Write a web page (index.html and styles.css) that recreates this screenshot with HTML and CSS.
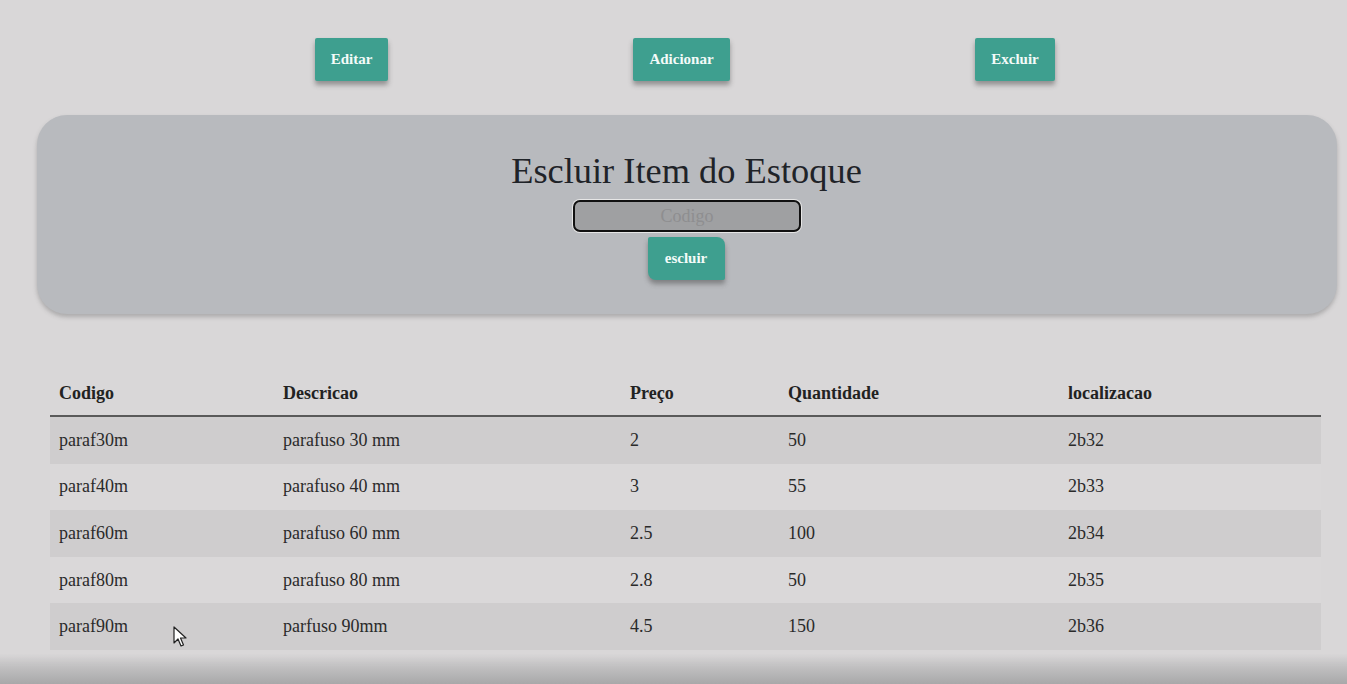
FILE: index.html
```html
<!DOCTYPE html>
<html lang="pt">
<head>
<meta charset="utf-8">
<title>Estoque</title>
<link rel="stylesheet" href="styles.css">
</head>
<body>
<div class="page">
  <nav class="actions">
    <button class="btn btn-editar">Editar</button>
    <button class="btn btn-adicionar">Adicionar</button>
    <button class="btn btn-excluir">Excluir</button>
  </nav>

  <section class="panel">
    <h1 class="panel-title">Escluir Item do Estoque</h1>
    <input class="code-input" type="text" placeholder="Codigo">
    <button class="btn btn-escluir">escluir</button>
  </section>

  <table class="stock">
    <thead>
      <tr>
        <th class="c1">Codigo</th>
        <th class="c2">Descricao</th>
        <th class="c3">Preço</th>
        <th class="c4">Quantidade</th>
        <th class="c5">localizacao</th>
      </tr>
    </thead>
    <tbody>
      <tr><td>paraf30m</td><td>parafuso 30 mm</td><td>2</td><td>50</td><td>2b32</td></tr>
      <tr><td>paraf40m</td><td>parafuso 40 mm</td><td>3</td><td>55</td><td>2b33</td></tr>
      <tr><td>paraf60m</td><td>parafuso 60 mm</td><td>2.5</td><td>100</td><td>2b34</td></tr>
      <tr><td>paraf80m</td><td>parafuso 80 mm</td><td>2.8</td><td>50</td><td>2b35</td></tr>
      <tr><td>paraf90m</td><td>parfuso 90mm</td><td>4.5</td><td>150</td><td>2b36</td></tr>
    </tbody>
  </table>
</div>

<svg class="cursor" width="14" height="22" viewBox="0 0 14 22">
  <path d="M1 1 L1 17 L5 13 L8 20 L10.5 19 L7.5 12 L13 12 Z" fill="#fff" stroke="#222" stroke-width="1.2" stroke-linejoin="round"/>
</svg>
<div class="bottom-fade"></div>
</body>
</html>
```

FILE: styles.css
```css
html, body {
  margin: 0;
  padding: 0;
  background: #d9d7d8;
  font-family: "Liberation Serif", "Times New Roman", serif;
  color: #222;
  height: 100%;
  overflow: hidden;
}

.page {
  padding-top: 38px;
}

.actions {
  margin-left: 35px;
  width: 1300px;
  display: flex;
  justify-content: center;
  gap: 245px;
}

.btn {
  font-family: "Liberation Serif", "Times New Roman", serif;
  font-weight: bold;
  font-size: 15px;
  color: #f4fbf9;
  background: #3e9f8f;
  border: none;
  height: 43px;
  padding: 0 16px;
  border-radius: 2px;
  box-shadow: 0 4px 5px rgba(60, 60, 60, 0.45);
  cursor: pointer;
}

.btn-editar { width: 73px; padding: 0; }
.btn-adicionar { width: 97px; padding: 0; }
.btn-excluir { width: 80px; padding: 0; }

.panel {
  margin-top: 34px;
  margin-left: 37px;
  width: 1300px;
  height: 199px;
  box-sizing: border-box;
  background: #b8babe;
  border-radius: 30px;
  box-shadow: 0 3px 4px rgba(90, 90, 90, 0.35);
  display: flex;
  flex-direction: column;
  align-items: center;
  padding-top: 36px;
}

.panel-title {
  margin: 0;
  font-weight: normal;
  font-size: 36.4px;
  line-height: 41px;
  color: #1f2328;
  margin-left: -1px;
}

.code-input {
  margin-top: 8px;
  width: 228px;
  height: 32px;
  box-sizing: border-box;
  border: 2px solid #111;
  border-radius: 7px;
  background: #9fa0a2;
  text-align: center;
  font-family: "Liberation Serif", "Times New Roman", serif;
  font-size: 18px;
  color: #555;
  outline: none;
  box-shadow: 0 0 0 1px #e6e6e6;
}

.code-input::placeholder {
  color: #8e8e90;
}

.btn-escluir {
  margin-top: 5px;
  width: 77px;
  padding: 0;
  border-radius: 2px 8px 2px 8px;
  margin-left: -2px;
}

.stock {
  margin-top: 58px;
  margin-left: 50px;
  width: 1271px;
  border-collapse: collapse;
  font-size: 18px;
}

.stock th {
  text-align: left;
  font-weight: bold;
  height: 43px;
  padding: 0 9px;
  border-bottom: 2px solid #5a5a5a;
  color: #222;
}

.stock td {
  height: 46.6px;
  padding: 0 9px;
  color: #2a2a2a;
}

.stock .c1 { width: 206px; }
.stock .c2 { width: 329px; }
.stock .c3 { width: 140px; }
.stock .c4 { width: 262px; }

.stock tbody tr:nth-child(odd) { background: #cfcdce; }
.stock tbody tr:nth-child(even) { background: #dad8d9; }

.cursor {
  position: absolute;
  left: 173px;
  top: 626px;
}

.bottom-fade {
  position: fixed;
  left: 0;
  right: 0;
  bottom: 0;
  height: 30px;
  background: linear-gradient(to bottom, rgba(200,199,200,0) 0%, #c2c1c2 40%, #a8a8a9 100%);
}
```
